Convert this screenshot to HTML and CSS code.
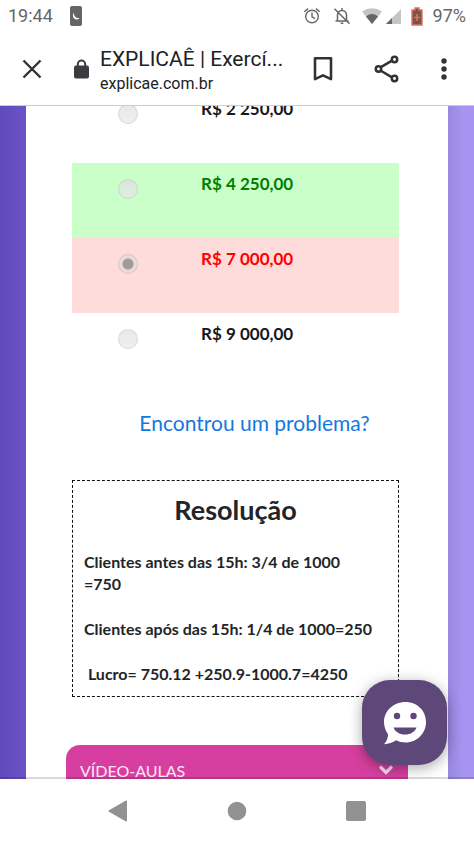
FILE: index.html
```html
<!DOCTYPE html>
<html lang="pt-BR">
<head>
<meta charset="utf-8">
<meta name="viewport" content="width=device-width, initial-scale=1">
<title>EXPLICAÊ | Exercícios</title>
<link rel="stylesheet" href="styles.css">
</head>
<body>
<div class="status">
  <span class="clock">19:44</span>
  <svg class="night" width="12" height="20" viewBox="0 0 12 20"><rect width="12" height="20" rx="2" fill="#656565"/><path d="M4 6.500C2 9.500 3.200 13.500 6.500 13.500c1.400 0 2.500-.6 3-1.500C6 12.500 3.700 10 4 6.500z" fill="#fff"/></svg>
  <div class="indicators">
    <svg width="18" height="18" viewBox="0 0 18 18" fill="none" stroke="#666" stroke-width="1.400"><circle cx="9" cy="9.500" r="6.300"/><path d="M9 5.500v4.300l3 1.800M1.300 4.700l3.700-3.100M16.700 4.700L13 1.600"/></svg>
    <svg class="bell" width="18" height="18" viewBox="0 0 18 18" fill="none" stroke="#666" stroke-width="1.500"><path d="M4.500 13.500V8c0-2.600 1.800-4.600 4.500-4.600s4.500 2 4.500 4.600v5.500M2.500 14h13M9 1v2.500M1.500 1.800l15 15"/><path d="M7.300 15.500h3.400a1.700 1.700 0 0 1-3.400 0z" fill="#666" stroke="none"/></svg>
    <svg class="wifi" width="20" height="16" viewBox="0 0 20 16"><path d="M0 3.500Q10-3 20 3.500L10 16z" fill="#c4c4c4"/><path d="M4 8.400Q10 3.500 16 8.400L10 16z" fill="#656565"/></svg>
    <svg class="signal" width="15" height="15" viewBox="0 0 15 15"><path d="M0 15L15 0v15z" fill="#c4c4c4"/><path d="M0 15l6-6v6z" fill="#656565"/></svg>
    <svg class="battery" width="12" height="19" viewBox="0 0 12 19"><path d="M4 1h4v2h3v15H1V3h3z" fill="#6c5a4e" stroke="#ef6a5b" stroke-width="1.400"/><path d="M6 7v7M3 10.500h6" stroke="#ef6a5b" stroke-width="1.600"/></svg>
    <span class="percent">97%</span>
  </div>
</div>
<header class="toolbar">
  <button class="icon-btn close" aria-label="Fechar"><svg width="20" height="20" viewBox="0 0 20 20" fill="none" stroke="#303235" stroke-width="2.400"><path d="M1.500 1.500l17 17M18.500 1.500l-17 17"/></svg></button>
  <svg class="lock" width="15" height="20" viewBox="0 0 15 20"><path d="M3.800 8V5.200a3.700 3.700 0 0 1 7.400 0V8" fill="none" stroke="#3a3c40" stroke-width="2"/><rect y="6.500" width="15" height="13" rx="2" fill="#3a3c40"/></svg>
  <div class="site">
    <div class="site-title">EXPLICAÊ | Exercí...</div>
    <div class="site-host">explicae.com.br</div>
  </div>
  <div class="actions">
    <button class="icon-btn" aria-label="Favoritar"><svg width="20" height="26" viewBox="0 0 20 26" fill="none" stroke="#303235" stroke-width="2.600"><path d="M2 2.300h16v20.800l-8-3.700-8 3.700z" stroke-linejoin="round"/></svg></button>
    <button class="icon-btn" aria-label="Compartilhar"><svg width="26" height="28" viewBox="0 0 26 28" fill="none" stroke="#303235" stroke-width="2.500"><path d="M6.500 12.300l11.500-6.700M6.500 15.500L18 22.300"/><circle cx="4.500" cy="14" r="2.700"/><circle cx="20.500" cy="4.500" r="2.700"/><circle cx="20.500" cy="23.500" r="2.700"/></svg></button>
    <button class="icon-btn" aria-label="Mais opções"><svg width="6" height="22" viewBox="0 0 6 22" fill="#303235"><circle cx="3" cy="3" r="2.700"/><circle cx="3" cy="11" r="2.700"/><circle cx="3" cy="19" r="2.700"/></svg></button>
  </div>
</header>
<div class="view">
  <main class="sheet">
    <div class="options">
      <label class="option"><input type="radio" name="answer"><span>R$ 2 250,00</span></label>
      <label class="option correct"><input type="radio" name="answer"><span>R$ 4 250,00</span></label>
      <label class="option wrong"><input type="radio" name="answer" checked><span>R$ 7 000,00</span></label>
      <label class="option"><input type="radio" name="answer"><span>R$ 9 000,00</span></label>
    </div>
    <a class="report" href="#problema">Encontrou um problema?</a>
    <section class="solution">
      <h2>Resolução</h2>
      <p>Clientes antes das 15h: 3/4 de 1000<br>=750</p>
      <p>Clientes após das 15h: 1/4 de 1000=250</p>
      <p>&nbsp;Lucro= 750.12 +250.9-1000.7=4250</p>
    </section>
    <button class="lessons"><span>VÍDEO-AULAS</span><svg width="16" height="12" viewBox="0 0 16 12" fill="none" stroke="#f8dff0" stroke-width="3.200"><path d="M2 2.500l6 6 6-6"/></svg></button>
  </main>
  <button class="chat" aria-label="Chat"><svg width="44" height="44" viewBox="0 0 44 44"><path d="M22.500 1C34 1 43 9.500 43 21S34 41.500 22.500 41.500c-3.500 0-6.500-.7-9.300-2.200-3.500 2.400-7.500 3.700-12.200 4 2.800-3 4-6.200 4-10C2.500 29.500 1 25.500 1 21 1 9.500 11 1 22.500 1z" fill="#fff"/><circle cx="14" cy="15" r="3.200" fill="#5d4879"/><circle cx="30.500" cy="15" r="3.200" fill="#5d4879"/><path d="M10.500 26.500h23c-1.500 4.300-5.800 7-11.500 7s-10-2.700-11.500-7z" fill="#5d4879"/></svg></button>
</div>
<nav class="system">
  <button class="icon-btn" aria-label="Voltar"><svg width="20" height="22" viewBox="0 0 20 22"><path d="M18 1.500v19L1.500 11z" fill="#929292" stroke="#929292" stroke-width="2" stroke-linejoin="round"/></svg></button>
  <button class="icon-btn" aria-label="Início"><svg width="20" height="20" viewBox="0 0 20 20"><circle cx="10" cy="10" r="9.300" fill="#929292"/></svg></button>
  <button class="icon-btn" aria-label="Recentes"><svg width="20" height="20" viewBox="0 0 20 20"><rect width="20" height="20" rx="2" fill="#929292"/></svg></button>
</nav>
</body>
</html>
```
FILE: styles.css
```css
* { box-sizing: border-box; }
body {
  margin: 0;
  height: 100vh;
  display: flex;
  flex-direction: column;
  overflow: hidden;
  background: #fff;
  color: #212529;
  font-family: Lato, "Noto Sans", sans-serif;
}
button { font: inherit; border: 0; cursor: pointer; }
svg { display: block; flex: none; }
.icon-btn { padding: 0; background: none; }

.status {
  flex: none;
  display: flex;
  align-items: center;
  height: 32px;
  padding: 0 8px;
  color: #666;
  font: 18px/32px Roboto, sans-serif;
}
.night { margin-left: 17px; }
.indicators { display: flex; align-items: center; margin-left: auto; }
.bell { margin-left: 12px; }
.wifi { margin-left: 11px; }
.signal { margin-left: 4px; }
.battery { margin: 0 10px; }

.toolbar {
  flex: none;
  display: flex;
  align-items: center;
  height: 73px;
  padding: 0 27px 0 22px;
  color: #202124;
  font-family: Roboto, sans-serif;
}
.lock { margin: 0 11px 0 32px; }
.site { flex: 1; min-width: 0; padding-top: 3px; }
.site-title {
  white-space: nowrap;
  font-size: 21px;
  line-height: 28px;
}
.site-host { font-size: 16px; line-height: 22px; }
.actions { display: flex; align-items: center; gap: 41px; margin-left: 32px; }

.view {
  position: relative;
  flex: 1;
  min-height: 0;
  overflow: hidden;
  padding: 0 26px;
  background: linear-gradient(90deg, #5f4bbb, #6852c6 20px, #9788df calc(100% - 26px), #a694f0 calc(100% - 12px));
}
.view::after {
  content: "";
  position: absolute;
  inset: 0;
  border-top: 1px solid #ccc;
  border-bottom: 2px solid rgba(0, 0, 0, .15);
  pointer-events: none;
}
.sheet {
  min-height: 100%;
  margin-top: -17px;
  padding: 0 49px 0 46px;
  background: #fff;
}
.option {
  display: grid;
  grid-template-columns: 46px 1fr;
  column-gap: 37px;
  align-items: start;
  height: 75px;
  padding: 10px 0 0 46px;
  color: #16181b;
  font-size: 17px;
  font-weight: 700;
  line-height: 22px;
}
.option input {
  appearance: none;
  width: 20px;
  height: 20px;
  margin: 6px 0 0;
  border: 1px solid rgba(0, 0, 0, .08);
  border-radius: 50%;
  background: linear-gradient(rgba(222, 222, 222, .7), rgba(232, 232, 232, .7));
}
.option input:checked { background: radial-gradient(circle, #a39a9a 5px, #eadada 6px); }
.correct { background: #caffca; color: #008000; }
.wrong { background: #ffdcdc; color: #f00; }

.report {
  display: block;
  margin: 20px 0 43px;
  padding-left: 38px;
  text-align: center;
  color: #1378e0;
  font-size: 21px;
  line-height: 29px;
  text-decoration: none;
}
.solution {
  padding: 10px 11px 11px;
  border: 1px dashed #111;
}
.solution h2 {
  margin: 0 0 22px;
  text-align: center;
  font-size: 27px;
  font-weight: 700;
  line-height: 38px;
}
.solution p {
  margin: 0 0 23px;
  white-space: nowrap;
  font-size: 16px;
  font-weight: 700;
  line-height: 22px;
}
.solution p:last-child { margin: 0; }
.lessons {
  display: flex;
  align-items: center;
  justify-content: space-between;
  width: calc(100% + 15px);
  height: 50px;
  margin: 48px -9px 0 -6px;
  padding: 0 14px;
  border-radius: 14px 14px 0 0;
  background: #d63f9f;
  color: #fce8f5;
  font-size: 16px;
}
.chat {
  position: absolute;
  right: 27px;
  bottom: 14px;
  display: grid;
  place-items: center;
  width: 85px;
  height: 85px;
  padding: 0;
  border-radius: 28px;
  background: #5d4879;
  box-shadow: 0 3px 14px rgba(0, 0, 0, .35);
}
.system {
  flex: none;
  display: flex;
  align-items: center;
  justify-content: space-between;
  height: 63px;
  padding: 0 108px;
}
```
